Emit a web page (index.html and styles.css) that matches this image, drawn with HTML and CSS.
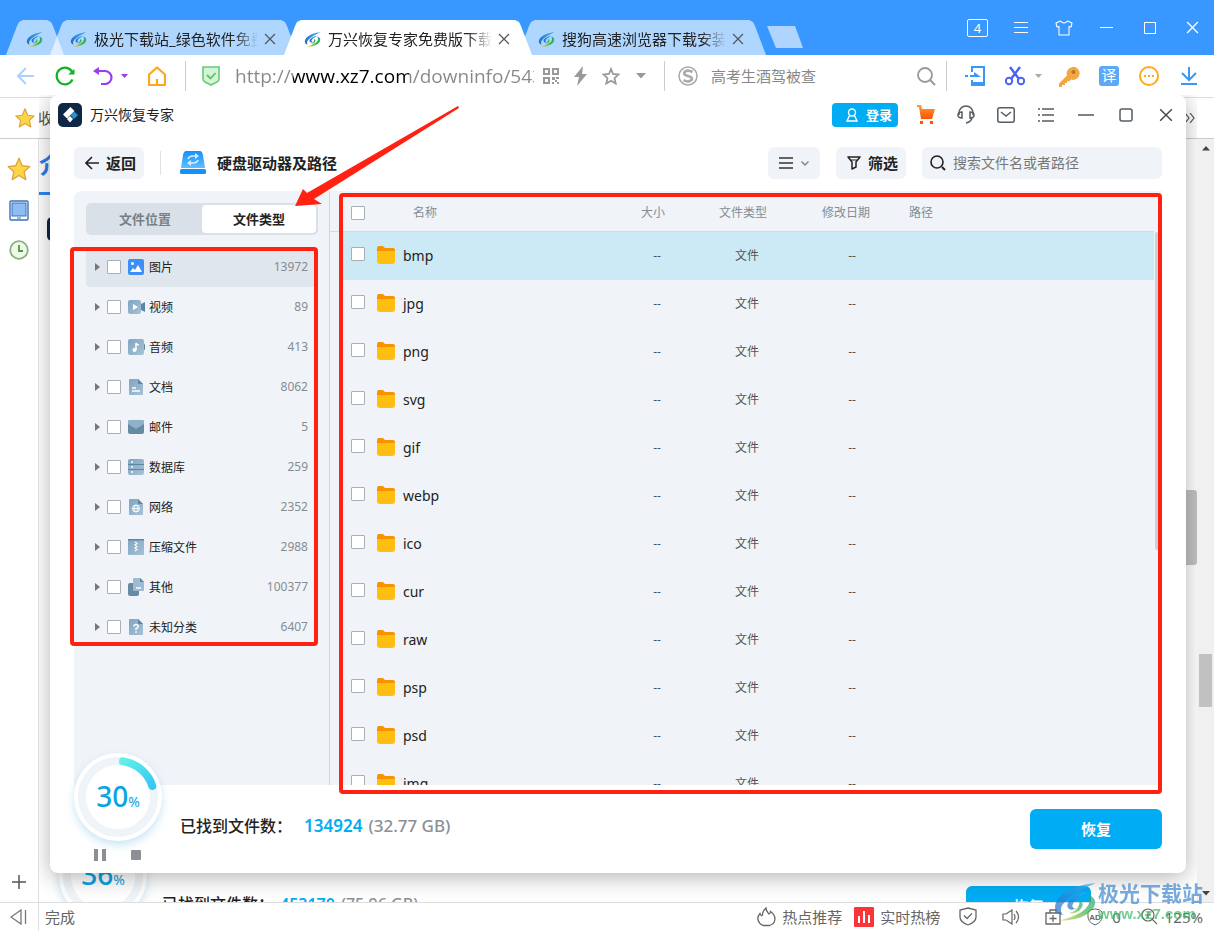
FILE: index.html
```html
<!DOCTYPE html>
<html lang="zh-CN">
<head>
<meta charset="utf-8">
<title>万兴恢复专家免费版下载</title>
<link rel="stylesheet" href="styles.css">
</head>
<body>
<svg class="defs" aria-hidden="true">
  <defs>
    <linearGradient id="swBlue" x1="0" y1="1" x2="1" y2="0"><stop offset="0" stop-color="#1f66c8"/><stop offset="1" stop-color="#3fb0ea"/></linearGradient>
    <linearGradient id="swGreen" x1="0" y1="1" x2="1" y2="0"><stop offset="0" stop-color="#e3d24a"/><stop offset=".5" stop-color="#3fb44a"/><stop offset="1" stop-color="#2aa58a"/></linearGradient>
    <linearGradient id="arc" x1="0" y1="0" x2="1" y2="1"><stop offset="0" stop-color="#62efe9"/><stop offset="1" stop-color="#35c8f3"/></linearGradient>
    <linearGradient id="cart" x1="0" y1="0" x2="0" y2="1"><stop offset="0" stop-color="#ff9a2e"/><stop offset="1" stop-color="#ff5208"/></linearGradient>
    <linearGradient id="drive" x1="0" y1="0" x2="0" y2="1"><stop offset="0" stop-color="#1590fb"/><stop offset="1" stop-color="#5cc0ff"/></linearGradient>
    <linearGradient id="slate" x1="0" y1="0" x2="1" y2="1"><stop offset="0" stop-color="#7fa6c3"/><stop offset="1" stop-color="#a6c1d6"/></linearGradient>
  </defs>
  <symbol id="swirl" viewBox="0 0 40 40">
    <path d="M39 3C24 3 4 12 2 23c-1 6 3 8 7 9-3-4-2-8 1-11C16 14 27 8 39 3z" fill="url(#swBlue)"/>
    <path d="M31 11c-9 1-17 6-18 12 0 4 4 5 8 3-3 0-4-2-3-4 2-5 7-7 13-11z" fill="url(#swBlue)"/>
    <path d="M31 13c7 2 9 7 6 12-5 8-17 12-31 12 11-3 22-7 26-14 2-4 1-7-1-10z" fill="url(#swGreen)"/>
    <path d="M24 19c3 1 4 3 2 6-2 4-7 6-12 5 4-1 8-3 9-6 1-2 1-3 1-5z" fill="url(#swGreen)"/>
  </symbol>
  <symbol id="folder" viewBox="0 0 18 18"><path d="M0 2q0-2 2-2h4l2 2h8q2 0 2 2v6H0z" fill="#f59300"/><path d="M0 5h18v10q0 3-3 3H3q-3 0-3-3z" fill="#ffbf10"/></symbol>
  <symbol id="x" viewBox="0 0 12 12"><path d="M1 1l10 10M11 1L1 11" fill="none" stroke="currentColor" stroke-width="1.2"/></symbol>
  <symbol id="starGold" viewBox="0 0 24 24"><path d="M12 2l3 7 7 .8-5.200 4.800 1.500 7.200L12 18l-6.300 3.800 1.500-7.200L2 9.800 9 9z" fill="#fcd548" stroke="#dfa23a" stroke-width="1.200" stroke-linejoin="round"/></symbol>
  <symbol id="doc" viewBox="0 0 16 16"><path d="M1 1q0-1 1-1h8l5 5v10q0 1-1 1H2q-1 0-1-1z" fill="url(#slate)"/><path d="M10 0l5 5h-5z" fill="#5e86a0"/></symbol>
</svg>

<header class="titlebar">
  <nav class="tabs">
    <div class="tab tab-pinned"><svg class="favicon"><use href="#swirl"/></svg></div>
    <div class="tab"><svg class="favicon"><use href="#swirl"/></svg><span class="tab-text">极光下载站_绿色软件免费</span><button class="tab-close" aria-label="关闭"><svg width="12" height="12"><use href="#x"/></svg></button></div>
    <div class="tab tab-active"><svg class="favicon"><use href="#swirl"/></svg><span class="tab-text">万兴恢复专家免费版下载</span><button class="tab-close" aria-label="关闭"><svg width="12" height="12"><use href="#x"/></svg></button></div>
    <div class="tab"><svg class="favicon"><use href="#swirl"/></svg><span class="tab-text">搜狗高速浏览器下载安装</span><button class="tab-close" aria-label="关闭"><svg width="12" height="12"><use href="#x"/></svg></button></div>
    <button class="tab-new" aria-label="新建标签"></button>
  </nav>
  <div class="sys-buttons">
    <button aria-label="标签数"><span class="tab-count">4</span></button>
    <button aria-label="菜单"><svg width="14" height="12" viewBox="0 0 14 12"><path d="M0 .5h14M0 5.500h14M0 10.500h14" stroke="#fff"/></svg></button>
    <button aria-label="皮肤"><svg width="18" height="16" viewBox="0 0 18 16"><path d="M5.500 1L1 3l1 4 2-.5V15h10V6.500l2 .5 1-4-4.500-2Q9 5 5.500 1z" fill="none" stroke="#fff" stroke-width="1.100" stroke-linejoin="round"/></svg></button>
    <button aria-label="最小化"><svg width="14" height="12" viewBox="0 0 14 12"><path d="M0 5.500h13" stroke="#fff"/></svg></button>
    <button aria-label="最大化"><svg width="12" height="12"><rect x=".5" y=".5" width="11" height="11" fill="none" stroke="#fff"/></svg></button>
    <button class="white" aria-label="关闭"><svg width="13" height="13"><use href="#x"/></svg></button>
  </div>
</header>

<div class="toolbar">
  <button class="tool" aria-label="后退"><svg width="18" height="18" viewBox="0 0 18 18"><path d="M10 1L2 9l8 8M2 9h16" fill="none" stroke="#a9d2ff" stroke-width="2"/></svg></button>
  <button class="tool" aria-label="刷新"><svg width="20" height="20" viewBox="0 0 20 20"><path d="M17.500 6.500A8.300 8.300 0 1 0 17.500 13.500" fill="none" stroke="#12b324" stroke-width="2.200"/><path d="M13 8.500h6.500V3z" fill="#12b324"/></svg></button>
  <button class="tool tool-undo" aria-label="撤销"><svg width="20" height="18" viewBox="0 0 20 18"><path d="M4 4h8a6.500 6.500 0 0 1 0 13H8" fill="none" stroke="#9a3cf0" stroke-width="2.200"/><path d="M6 0v8L0 4z" fill="#9a3cf0"/></svg><svg width="8" height="5"><path d="M0 0h7L3.500 4z" fill="#9a3cf0"/></svg></button>
  <button class="tool" aria-label="主页"><svg width="18" height="20" viewBox="0 0 18 20"><path d="M1 8.500L9 1.500l8 7V19H1zM9 19v-6" fill="none" stroke="#ffa71a" stroke-width="2.200" stroke-linejoin="round"/></svg></button>
  <div class="address">
    <svg width="18" height="20" viewBox="0 0 18 20"><path d="M1 1h16v12q0 2-2 3l-6 3-6-3q-2-1-2-3z" fill="#d2f5d6" stroke="#6cc97a" stroke-width="1.600"/><path d="M5 9l3.500 3.500L13.500 7" fill="none" stroke="#5fbf6e" stroke-width="1.800"/></svg>
    <input class="url" type="text" aria-label="网址" value="http://www.xz7.com/downinfo/543921.html">
    <button aria-label="二维码"><svg width="16" height="16" viewBox="0 0 16 16"><path d="M1 1h5v5H1zM10 1h5v5h-5zM1 10h5v5H1z" fill="none" stroke="#999" stroke-width="2"/><path d="M9 9h3v3H9zM13 9h3v2h-3zM12 12h2v2h-2zM9 14h2v2H9zM14 14h2v2h-2z" fill="#999"/></svg></button>
    <button aria-label="闪电"><svg width="16" height="20" viewBox="0 0 16 20"><path d="M10 0L1 11h5L4 20l10-12H9z" fill="#999"/></svg></button>
    <button aria-label="收藏"><svg width="18" height="18" viewBox="0 0 18 18"><path d="M9 2l2 5 5.500.5-4 3.700 1.200 5.300L9 13.700l-4.700 2.800 1.200-5.300-4-3.700L7 7z" fill="none" stroke="#999" stroke-width="1.800"/></svg></button>
    <button aria-label="更多"><svg width="10" height="6"><path d="M0 0h10L5 5.500z" fill="#999"/></svg></button>
  </div>
  <div class="websearch">
    <svg width="21" height="21" viewBox="0 0 21 21"><circle cx="10" cy="10" r="9" fill="none" stroke="#aaa" stroke-width="1.500"/><path d="M14.500 6Q10 3.500 7 5.500C4.500 8 8 9.500 10 10s5 1.500 3.500 4Q10 17 5.500 14" fill="none" stroke="#aaa" stroke-width="2.600"/></svg>
    <input type="text" aria-label="搜索" placeholder="高考生酒驾被查">
    <button aria-label="搜索"><svg width="19" height="19" viewBox="0 0 19 19"><circle cx="8" cy="8" r="7" fill="none" stroke="#999" stroke-width="1.800"/><path d="M13 13l5 5" stroke="#999" stroke-width="2"/></svg></button>
  </div>
  <div class="ext">
    <button class="tool" aria-label="发送到手机"><svg width="20" height="20" viewBox="0 0 20 20"><path d="M7 6V1h12v18H7v-5" fill="none" stroke="#3a97f7" stroke-width="2"/><path d="M7 16h12v3H7z" fill="#3a97f7"/><path d="M0 10h3M5 10h6" stroke="#3a97f7" stroke-width="2"/><path d="M9 6l7 5H9z" fill="#3a97f7"/></svg></button>
    <button class="tool" aria-label="截图"><svg width="20" height="20" viewBox="0 0 20 20"><path d="M5 1l9 12M15 1L6 13" stroke="#4a62f5" stroke-width="2.400"/><circle cx="4" cy="15" r="3.200" fill="none" stroke="#4a62f5" stroke-width="2"/><circle cx="16" cy="15" r="3.200" fill="none" stroke="#4a62f5" stroke-width="2"/></svg></button>
    <svg class="ext-caret" width="7" height="5"><path d="M0 0h7L3.500 4z" fill="#aaa"/></svg>
    <button class="tool" aria-label="密码"><svg width="21" height="21" viewBox="0 0 21 21"><path d="M0 17.500L8 9.500a6.500 6.500 0 1 1 4 4L10 15.500 8 15v2H6v2H3v2H0z" fill="#f2a743"/><circle cx="14.500" cy="6" r="2" fill="#b87a28"/></svg></button>
    <button class="tool" aria-label="翻译"><span class="translate">译</span></button>
    <button class="tool" aria-label="更多"><svg width="20" height="20" viewBox="0 0 20 20"><circle cx="10" cy="10" r="9" fill="none" stroke="#ffa91e" stroke-width="2"/><path d="M5 9h2v2H5zM9 9h2v2H9zM13 9h2v2h-2z" fill="#ffa91e"/></svg></button>
    <button class="tool" aria-label="下载"><svg width="18" height="18" viewBox="0 0 18 18"><path d="M9 0v13M2 6l7 7 7-7M1 17h16" fill="none" stroke="#3a97f7" stroke-width="2"/></svg></button>
  </div>
</div>

<div class="bookmarks"><svg width="22" height="22"><use href="#starGold"/></svg><span>收藏</span><button class="bm-more" aria-label="更多书签"><svg width="12" height="10" viewBox="0 0 12 10"><path d="M1 0l4 5-4 5M6 0l4 5-4 5" fill="none" stroke="#555" stroke-width="1.200"/></svg></button></div>

<div class="main">
  <aside class="side">
    <svg width="26" height="26"><use href="#starGold"/></svg>
    <svg width="20" height="22" viewBox="0 0 20 22"><rect x="1" y="1" width="18" height="19" rx="1" fill="#fff" stroke="#3f70b5" stroke-width="1.400"/><rect x="3" y="3" width="14" height="13" fill="#8fbdf1" stroke="#3572c4"/><path d="M8 18h4" stroke="#3572c4"/></svg>
    <svg width="20" height="20" viewBox="0 0 20 20"><circle cx="10" cy="10" r="8.800" fill="#eff8e9" stroke="#8ab27e" stroke-width="1.800"/><path d="M10 5v6h4" fill="none" stroke="#4f9a3c" stroke-width="1.800"/></svg>
    <svg class="side-plus" width="14" height="14"><path d="M7 0v14M0 7h14" stroke="#555" stroke-width="1.500"/></svg>
  </aside>
  <main class="page">
    <h1 class="page-tab">介绍</h1>
    <div class="page-logo"></div>
    <div class="page-bottom">
      <div class="ring">
        <svg width="88" height="88" viewBox="0 0 88 88"><circle cx="44" cy="44" r="36" fill="none" stroke="#eff4f8" stroke-width="8"/></svg>
        <div class="ring-value"><b>36</b>%</div>
      </div>
      <p class="found">已找到文件数：<b>453170</b><span>(75.96 GB)</span></p>
      <button class="recover recover-back">恢复</button>
    </div>
    <div class="page-thumb"></div>
  </main>
  <div class="scrollbar"><svg width="8" height="5"><path d="M4 0l4 4.500H0z" fill="#444"/></svg><i></i><svg width="8" height="5"><path d="M0 0h8L4 4.500z" fill="#444"/></svg></div>
</div>

<footer class="status">
  <button class="status-toggle" aria-label="侧栏"><svg width="18" height="16" viewBox="0 0 18 16"><path d="M11 1v14L1 8zM15.500 1v14" fill="none" stroke="#777" stroke-width="1.300"/></svg></button>
  <span class="status-done">完成</span>
  <a href="#" class="hot"><svg width="19" height="20" viewBox="0 0 19 20"><path d="M6 18.500C1 16.500-1 11 3 6.500 4 9 5 9 5.500 8 5.500 5 6.500 3 9 1c0 3 1.500 4 3 6 1-.5 1.500-1 1.500-2.500C20 9 19 16.500 12.500 18.500z" fill="none" stroke="#666" stroke-width="1.300"/></svg>热点推荐</a>
  <a href="#" class="rank"><svg width="20" height="20"><rect width="20" height="20" rx="1" fill="#fb3537"/><path d="M5 9v7M10 4v12M15 8v8" stroke="#fff" stroke-width="2"/></svg>实时热榜</a>
  <svg width="18" height="19" viewBox="0 0 18 19"><path d="M9 1l8 2v7q0 5-8 8-8-3-8-8V3z" fill="none" stroke="#666" stroke-width="1.300"/><path d="M5 8.500l3 3 5-5" fill="none" stroke="#666" stroke-width="1.300"/></svg>
  <svg width="18" height="16" viewBox="0 0 18 16"><path d="M1 5v6h3l6 4V1L4 5zM12 5q2 3 0 6M14 2q5 6 0 12" fill="none" stroke="#666" stroke-width="1.200"/></svg>
  <svg width="16" height="16" viewBox="0 0 16 16"><path d="M1 4h14v11H1zM5 4V1h6v3M8 6v7M4.500 9.500h7" fill="none" stroke="#666" stroke-width="1.300"/></svg>
  <span class="adblock"><svg width="18" height="18" viewBox="0 0 18 18"><path d="M9 1q5 0 7 3v5q0 5-7 8-7-3-7-8V4q2-3 7-3z" fill="none" stroke="#666"/><text x="9" y="12" text-anchor="middle" class="ad">AD</text></svg>0</span>
  <span class="zoom"><svg width="16" height="17" viewBox="0 0 16 17"><circle cx="7" cy="7" r="6" fill="none" stroke="#666" stroke-width="1.200"/><path d="M11 11l5 5M4 7h6M7 4v6" stroke="#666" stroke-width="1.200"/></svg>125%</span>
</footer>

<section class="app">
  <header class="app-head">
    <svg width="24" height="24" viewBox="0 0 24 24"><rect width="24" height="24" rx="5" fill="#0e2744"/><path d="M12.500 4l4 4-7.500 7.500-4-4z" fill="#fff"/><path d="M12 13l3 3-3 3.500-3-3.500z" fill="#fff"/><path d="M16 8.500l4 3.500-4 4-3.500-3.800z" fill="#2494d8"/></svg>
    <h2>万兴恢复专家</h2>
    <button class="login"><svg width="12" height="14" viewBox="0 0 12 14"><circle cx="6" cy="4.500" r="3.500" fill="none" stroke="#fff" stroke-width="1.400"/><path d="M3.500 7.500L1 13h10L8.500 7.500" fill="none" stroke="#fff" stroke-width="1.400"/></svg>登录</button>
    <button class="app-btn" aria-label="购物车"><svg width="20" height="20" viewBox="0 0 20 20"><path d="M1 0h4l1 4h13l-3 10H5L3 2H1z" fill="url(#cart)"/><path d="M4 16h3v3H4zM14 16h3v3h-3z" fill="#ff5208"/></svg></button>
    <button class="app-btn" aria-label="客服"><svg width="18" height="20" viewBox="0 0 18 20"><path d="M2 10V8a7 7 0 0 1 14 0v2" fill="none" stroke="#555c62" stroke-width="1.500"/><path d="M5 7v6q-4 0-4-3t4-3zM13 7v6q4 0 4-3t-4-3zM15 13q-1 4-6 5" fill="none" stroke="#555c62" stroke-width="1.500"/></svg></button>
    <button class="app-btn" aria-label="邮件"><svg width="18" height="16" viewBox="0 0 18 16"><rect x=".8" y=".8" width="16.400" height="14.400" rx="2" fill="none" stroke="#555c62" stroke-width="1.500"/><path d="M4 5l5 4 5-4" fill="none" stroke="#555c62" stroke-width="1.500"/></svg></button>
    <button class="app-btn" aria-label="列表"><svg width="16" height="16" viewBox="0 0 16 16"><path d="M0 2h2M4 2h12M0 8h2M4 8h12M0 14h2M4 14h12" stroke="#555c62" stroke-width="1.600"/></svg></button>
    <button class="app-btn" aria-label="最小化"><svg width="16" height="2"><path d="M0 1h16" stroke="#7a8288" stroke-width="2"/></svg></button>
    <button class="app-btn" aria-label="最大化"><svg width="14" height="14"><rect x="1" y="1" width="12" height="12" rx="2" fill="none" stroke="#555c62" stroke-width="1.500"/></svg></button>
    <button class="app-btn" aria-label="关闭"><svg width="14" height="14"><use href="#x"/></svg></button>
  </header>

  <div class="app-bar">
    <button class="pill back"><svg width="14" height="14" viewBox="0 0 14 14"><path d="M7 1L1 7l6 6M1 7h13" fill="none" stroke="#222" stroke-width="1.600"/></svg>返回</button>
    <svg class="drive" width="26" height="24" viewBox="0 0 26 24"><path d="M6 0h14q2 0 3 4l2 13H1L3 4q1-4 3-4z" fill="url(#drive)"/><rect y="18" width="26" height="5" rx="1.500" fill="#1690fa"/><path d="M8 8q1-3 5-3h3M18 9q-1 3-5 3h-3" fill="none" stroke="#d6edff" stroke-width="1.600"/><path d="M15 2l4 3-4 3zM11 9l-4 3 4 3z" fill="#d6edff"/></svg>
    <h3>硬盘驱动器及路径</h3>
    <button class="pill view" aria-label="视图"><svg width="14" height="12" viewBox="0 0 14 12"><path d="M0 1h14M0 6h14M0 11h14" stroke="#333" stroke-width="1.500"/></svg><svg width="8" height="5" viewBox="0 0 8 5"><path d="M.5.5L4 4 7.500.5" fill="none" stroke="#888" stroke-width="1.500"/></svg></button>
    <button class="pill filter"><svg width="14" height="14" viewBox="0 0 14 14"><path d="M1 1h12L9 6v5l-4 2V6z" fill="none" stroke="#222" stroke-width="1.500" stroke-linejoin="round"/><path d="M4 4h6" stroke="#222"/></svg>筛选</button>
    <label class="pill find"><svg width="16" height="16" viewBox="0 0 16 16"><circle cx="7" cy="7" r="6" fill="none" stroke="#222" stroke-width="1.600"/><path d="M12 12l3 3" stroke="#222" stroke-width="2"/></svg><input type="text" aria-label="搜索文件" placeholder="搜索文件名或者路径"></label>
  </div>

  <div class="app-body">
    <aside class="panel-left">
      <div class="segment"><button>文件位置</button><button class="on">文件类型</button></div>
      <ul class="tree">
        <li class="sel"><i class="tri"></i><input type="checkbox" id="t1"><svg width="16" height="16"><rect width="16" height="16" rx="2" fill="#3b8ff5"/><circle cx="4.500" cy="4.500" r="1.500" fill="#fff"/><path d="M2 13l3-4 2 2 3-5 4 7z" fill="#fff"/></svg><label for="t1">图片</label><output>13972</output></li>
        <li><i class="tri"></i><input type="checkbox" id="t2"><svg width="17" height="16"><rect y="1" width="13" height="14" rx="2" fill="url(#slate)"/><path d="M17 3v10l-4-2V5z" fill="#5e86a0"/><path d="M5 5l5 3-5 3z" fill="#fff"/></svg><label for="t2">视频</label><output>89</output></li>
        <li><i class="tri"></i><input type="checkbox" id="t3"><svg width="17" height="16"><circle cx="13" cy="8" r="4.500" fill="#5e86a0"/><rect width="16" height="16" rx="2" fill="url(#slate)"/><path d="M8 11V4q1 2 3 2" fill="none" stroke="#fff" stroke-width="1.500"/><circle cx="6.500" cy="11" r="2" fill="#fff"/></svg><label for="t3">音频</label><output>413</output></li>
        <li><i class="tri"></i><input type="checkbox" id="t4"><svg width="16" height="16"><use href="#doc" width="16" height="16"/><path d="M4 9h4M4 12h8" stroke="#fff" stroke-width="1.500"/></svg><label for="t4">文档</label><output>8062</output></li>
        <li><i class="tri"></i><input type="checkbox" id="t5"><svg width="16" height="16"><rect y="1" width="16" height="14" rx="2" fill="#668ba3"/><path d="M0 5V3q0-2 2-2h12q2 0 2 2v2l-8 5z" fill="#8fb2cb"/></svg><label for="t5">邮件</label><output>5</output></li>
        <li><i class="tri"></i><input type="checkbox" id="t6"><svg width="16" height="16"><rect width="16" height="16" rx="2" fill="url(#slate)"/><path d="M0 5.500h16M0 10.500h16" stroke="#5e86a0"/><path d="M3 3h2M3 8h2M3 13h2" stroke="#fff" stroke-width="1.500"/></svg><label for="t6">数据库</label><output>259</output></li>
        <li><i class="tri"></i><input type="checkbox" id="t7"><svg width="16" height="16"><use href="#doc" width="16" height="16"/><circle cx="8" cy="9.500" r="3.500" fill="none" stroke="#fff"/><ellipse cx="8" cy="9.500" rx="1.500" ry="3.500" fill="none" stroke="#fff" stroke-width=".8"/><path d="M4.500 9.500h7" stroke="#fff"/></svg><label for="t7">网络</label><output>2352</output></li>
        <li><i class="tri"></i><input type="checkbox" id="t8"><svg width="16" height="16"><rect width="16" height="16" rx="1" fill="url(#slate)"/><path d="M0 .7h16" stroke="#5e86a0" stroke-width="1.400"/><path d="M7 3l2 1.500L7 6l2 1.500L7 9l2 1.500L7 12" fill="none" stroke="#fff" stroke-width="1.200"/></svg><label for="t8">压缩文件</label><output>2988</output></li>
        <li><i class="tri"></i><input type="checkbox" id="t9"><svg width="16" height="18"><rect y="5" width="11" height="13" rx="2" fill="#668ba3"/><path d="M5 1q0-1 1-1h6l4 4v8q0 1-1 1H6q-1 0-1-1z" fill="#9dbbd1"/><path d="M12 0l4 4h-4z" fill="#5e86a0"/><path d="M8 10h5" stroke="#fff" stroke-width="1.500"/></svg><label for="t9">其他</label><output>100377</output></li>
        <li><i class="tri"></i><input type="checkbox" id="t10"><svg width="16" height="16"><use href="#doc" width="16" height="16"/><path d="M5.800 7.500Q6 5.500 8 5.500t2.200 2Q10 9 8 9.500V11" fill="none" stroke="#fff" stroke-width="1.500"/><path d="M7.200 12.200h1.600v1.600H7.200z" fill="#fff"/></svg><label for="t10">未知分类</label><output>6407</output></li>
      </ul>
      <div class="mark mark-tree"></div>
    </aside>

    <div class="panel-right">
      <div class="table-wrap">
        <table>
          <colgroup><col class="c-check"><col class="c-name"><col class="c-size"><col class="c-type"><col class="c-date"><col></colgroup>
          <thead><tr><th><input type="checkbox" aria-label="全选"></th><th class="name">名称</th><th>大小</th><th>文件类型</th><th class="date">修改日期</th><th class="path">路径</th></tr></thead>
          <tbody>
            <tr class="sel"><td><input type="checkbox" aria-label="bmp"></td><td class="name"><svg><use href="#folder"/></svg>bmp</td><td>--</td><td>文件</td><td>--</td><td></td></tr>
            <tr><td><input type="checkbox" aria-label="jpg"></td><td class="name"><svg><use href="#folder"/></svg>jpg</td><td>--</td><td>文件</td><td>--</td><td></td></tr>
            <tr><td><input type="checkbox" aria-label="png"></td><td class="name"><svg><use href="#folder"/></svg>png</td><td>--</td><td>文件</td><td>--</td><td></td></tr>
            <tr><td><input type="checkbox" aria-label="svg"></td><td class="name"><svg><use href="#folder"/></svg>svg</td><td>--</td><td>文件</td><td>--</td><td></td></tr>
            <tr><td><input type="checkbox" aria-label="gif"></td><td class="name"><svg><use href="#folder"/></svg>gif</td><td>--</td><td>文件</td><td>--</td><td></td></tr>
            <tr><td><input type="checkbox" aria-label="webp"></td><td class="name"><svg><use href="#folder"/></svg>webp</td><td>--</td><td>文件</td><td>--</td><td></td></tr>
            <tr><td><input type="checkbox" aria-label="ico"></td><td class="name"><svg><use href="#folder"/></svg>ico</td><td>--</td><td>文件</td><td>--</td><td></td></tr>
            <tr><td><input type="checkbox" aria-label="cur"></td><td class="name"><svg><use href="#folder"/></svg>cur</td><td>--</td><td>文件</td><td>--</td><td></td></tr>
            <tr><td><input type="checkbox" aria-label="raw"></td><td class="name"><svg><use href="#folder"/></svg>raw</td><td>--</td><td>文件</td><td>--</td><td></td></tr>
            <tr><td><input type="checkbox" aria-label="psp"></td><td class="name"><svg><use href="#folder"/></svg>psp</td><td>--</td><td>文件</td><td>--</td><td></td></tr>
            <tr><td><input type="checkbox" aria-label="psd"></td><td class="name"><svg><use href="#folder"/></svg>psd</td><td>--</td><td>文件</td><td>--</td><td></td></tr>
            <tr><td><input type="checkbox" aria-label="img"></td><td class="name"><svg><use href="#folder"/></svg>img</td><td>--</td><td>文件</td><td>--</td><td></td></tr>
          </tbody>
        </table>
        <div class="table-thumb"></div>
      </div>
      <div class="mark mark-table"></div>
    </div>
  </div>

  <footer class="app-foot">
    <div class="progress">
      <div class="ring">
        <svg width="88" height="88" viewBox="0 0 88 88"><circle cx="44" cy="44" r="36" fill="none" stroke="#eff4f8" stroke-width="8"/><path d="M49 8.400A36 36 0 0 1 78.300 33" fill="none" stroke="url(#arc)" stroke-width="8" stroke-linecap="round"/></svg>
        <div class="ring-value"><b>30</b>%</div>
      </div>
      <div class="controls"><button aria-label="暂停"><svg width="12" height="12"><path d="M0 0h4v12H0zM8 0h4v12H8z" fill="#8a9096"/></svg></button><button aria-label="停止"><svg width="10" height="10"><rect width="10" height="10" rx="1" fill="#8a9096"/></svg></button></div>
    </div>
    <p class="found">已找到文件数：<b>134924</b><span>(32.77 GB)</span></p>
    <button class="recover">恢复</button>
  </footer>
  <svg class="arrow" width="166" height="102" viewBox="294 105 166 102"><path d="M458 106l1 2-145 91 8 5-27 2 8-17 4 4z" fill="#ff2112"/></svg>
</section>

<div class="watermark"><svg width="46" height="44"><use href="#swirl"/></svg><div><strong>极光下载站</strong><em>www.xz7.com</em></div></div>
</body>
</html>
```
FILE: styles.css
```css
* { box-sizing: border-box; }
body {
  margin: 0;
  height: 100vh;
  display: flex;
  flex-direction: column;
  overflow: hidden;
  position: relative;
  background: #fff;
  color: #222;
  font: 14px/20px "Noto Sans", "Noto Sans CJK SC", sans-serif;
}
button, input { font: inherit; color: inherit; }
button { border: 0; padding: 0; background: none; display: flex; align-items: center; justify-content: center; }
h1, h2, h3, p, ul { margin: 0; padding: 0; font-weight: 400; }
svg { display: block; flex: none; }
input[type="text"] { border: 0; outline: 0; background: none; padding: 0; min-width: 0; }
input[type="checkbox"] {
  appearance: none;
  margin: 0;
  width: 14px;
  height: 14px;
  flex: none;
  display: block;
  background: #fff;
  border: 1px solid #a9b0b5;
  border-radius: 1px;
}
.defs { position: absolute; width: 0; height: 0; }

/* browser title bar */
.titlebar { flex: none; height: 55px; background: #3898ff; display: flex; justify-content: space-between; }
.tabs { display: flex; align-items: flex-end; padding-left: 6px; min-width: 0; }
.tab { position: relative; z-index: 0; width: 248px; height: 35px; margin-right: -14px; padding: 3px 22px 0 20px; display: flex; align-items: center; font-size: 15px; }
.tab::before {
  content: "";
  position: absolute;
  inset: 0;
  z-index: -1;
  background: rgba(255, 255, 255, .6);
  clip-path: polygon(0 100%, 11px 6px, 13px 2px, 17px 0, calc(100% - 17px) 0, calc(100% - 13px) 2px, calc(100% - 11px) 6px, 100% 100%);
}
.tab-pinned { width: 58px; }
.tab-active { z-index: 1; }
.tab-active::before { background: #fff; }
.favicon { width: 17px; height: 17px; }
.tab-text { flex: 1; margin: 0 6px 0 7px; overflow: hidden; white-space: nowrap; mask-image: linear-gradient(to right, #000 85%, transparent); }
.tab-close { color: #555; }
.tab-new { width: 36px; height: 22px; margin: 0 0 7px 15px; background: #afd5ff; clip-path: polygon(0 0, 28px 0, 100% 100%, 9px 100%); }
.sys-buttons { display: flex; }
.sys-buttons button { width: 43px; }
.white { color: #fff; }
.tab-count { width: 21px; height: 18px; border: 1px solid #fff; border-radius: 2px; color: #fff; font-size: 13px; line-height: 16px; text-align: center; }

/* browser toolbar */
.toolbar { flex: none; height: 43px; padding: 0 5px; display: flex; align-items: center; border-bottom: 1px solid #ddd; background: #fff; }
.tool { width: 40px; height: 40px; flex: none; }
.tool-undo { width: 52px; gap: 8px; }
.address { flex: 454 1 0; min-width: 0; height: 30px; margin-left: 8px; padding: 0 8px 0 16px; border-left: 1px solid #ccc; display: flex; align-items: center; }
.url {
  flex: 1;
  height: 30px;
  margin: 0 2px 0 15px;
  font: 19px/30px "Open Sans", sans-serif;
}
.address .url {
  color: transparent;
  background: linear-gradient(to right, #888 58px, #000 58px, #000 174px, #888 174px);
  background-clip: text;
}
.address button { width: 30px; height: 30px; }
.websearch { flex: 258 1 0; min-width: 0; height: 30px; padding: 0 10px 0 13px; border-left: 1px solid #ccc; border-right: 1px solid #ccc; display: flex; align-items: center; font-size: 15px; }
.websearch input { flex: 1; margin-left: 12px; }
.websearch input::placeholder { color: #888; opacity: 1; }
.ext { display: flex; align-items: center; margin-left: 8px; }
.ext-caret { margin-right: 7px; }
.translate { width: 20px; height: 20px; border-radius: 3px; background: #5aa9f8; color: #fff; font-size: 15px; line-height: 19px; text-align: center; }

.bookmarks { flex: none; height: 41px; padding: 0 18px 0 14px; border-bottom: 1px solid #ccc; display: flex; align-items: center; gap: 2px; font-size: 15px; color: #555; }
.bm-more { margin-left: auto; }

/* web page behind the application */
.main { flex: 1; min-height: 0; display: flex; }
.side { width: 39px; flex: none; border-right: 1px solid #ddd; padding: 17px 0 13px; display: flex; flex-direction: column; align-items: center; gap: 18px; }
.side-plus { margin-top: auto; }
.page { flex: 1; min-width: 0; position: relative; overflow: hidden; display: flex; flex-direction: column; background: #fff; }
.page-tab { width: 64px; padding: 11px 0 12px; border-bottom: 3px solid #2f86f6; color: #2f7bea; font-size: 24px; line-height: 30px; font-weight: 700; }
.page-logo { width: 24px; height: 24px; margin: 22px 0 0 8px; border-radius: 5px; background: #0e2744; }
.page-bottom { margin-top: auto; margin-bottom: -18px; padding: 0 106px 0 20px; display: flex; align-items: flex-end; }
.page-bottom .found { margin: 0 auto 4px 15px; }
.page-thumb { position: absolute; right: 0; top: 351px; width: 11px; height: 75px; background: #c2c2c2; border-radius: 0 3px 3px 0; }
.scrollbar { width: 17px; flex: none; background: #f0f0f0; display: flex; flex-direction: column; align-items: center; justify-content: space-between; padding: 7px 0 6px; }
.scrollbar i { width: 13px; height: 53px; margin-top: 318px; background: #c1c1c1; }

/* status bar */
.status { flex: none; height: 28px; padding-right: 11px; border-top: 1px solid #ddd; background: #fff; display: flex; align-items: center; gap: 25px; color: #666; font-size: 15px; line-height: 18px; }
.status-toggle { width: 39px; height: 27px; border-right: 1px solid #ddd; }
.status-done { margin: 0 auto 0 -19px; }
.status a { display: flex; align-items: center; gap: 6px; color: inherit; text-decoration: none; }
.rank { margin-left: -13px; margin-right: -6px; }
.adblock, .zoom { display: flex; align-items: center; gap: 8px; }
.adblock { margin-right: -5px; }
.ad { font: 700 8px "Liberation Sans", sans-serif; fill: #666; }

/* application window */
.app { position: absolute; z-index: 2; top: 95px; left: 50px; right: 28px; bottom: 57px; background: #fff; border-radius: 8px; box-shadow: 0 4px 22px rgba(0, 0, 0, .3); clip-path: inset(0 -11px -29px -11px); display: flex; flex-direction: column; }
.app-head { flex: none; height: 40px; padding-left: 8px; display: flex; align-items: center; color: #444; }
.app-head h2 { margin: 0 auto 0 8px; color: #222; font-size: 14px; line-height: 20px; }
.login { width: 66px; height: 24px; padding-left: 8px; gap: 8px; margin-right: 8px; border-radius: 4px; background: #00adf5; color: #fff; font-size: 13px; font-weight: 700; }
.app-btn { width: 40px; height: 40px; }
.app-bar { flex: none; height: 56px; padding: 0 24px 0 24px; display: flex; align-items: center; }
.pill { height: 32px; border-radius: 6px; background: #f0f4f8; display: flex; align-items: center; justify-content: center; gap: 7px; font-size: 15px; font-weight: 700; }
.back, .filter { width: 70px; padding-left: 3px; }
.drive { box-sizing: content-box; margin-left: 16px; padding-left: 19px; border-left: 1px solid #dde2e6; }
.app-bar h3 { margin: 0 auto 0 11px; font-size: 15px; line-height: 20px; font-weight: 700; }
.view { width: 52px; margin-right: 16px; gap: 8px; }
.filter { margin-right: 16px; }
.find { width: 240px; padding: 0 8px; font-size: 14px; font-weight: 400; }
.find input { flex: 1; }
.find input::placeholder { color: #777; opacity: 1; }

.app-body { flex: 1; min-height: 0; margin: 0 24px; display: flex; background: #f0f4f8; border-radius: 8px 0 0 0; }
.panel-left { position: relative; width: 256px; flex: none; padding: 12px 11px 0 12px; border-right: 1px solid #d0d5d9; }
.segment { height: 32px; padding: 2px; display: flex; border-radius: 5px; background: #dae0e7; font-size: 13px; font-weight: 700; }
.segment button { flex: 1; border-radius: 4px; color: #777f86; }
.segment .on { background: #fff; color: #222; }
.tree { list-style: none; margin-top: 12px; font-size: 12px; }
.tree li { height: 40px; padding: 0 10px 0 9px; display: flex; align-items: center; border-radius: 4px; }
.tree .sel { background: #e0e6ed; }
.tree label { padding-top: 2px; }
.tri { width: 5px; border: solid transparent; border-width: 4px 0 4px 5px; border-left-color: #777; margin-right: 7px; }
.tree svg { width: 17px; margin: 0 4px 0 7px; }
.tree output { margin-left: auto; color: #858c92; }
.panel-right { position: relative; flex: 1; min-width: 0; }
.table-wrap { position: relative; height: 100%; padding-right: 8px; overflow: hidden; }
table { width: 100%; table-layout: fixed; border-collapse: separate; border-spacing: 0; font-size: 12px; }
.c-check { width: 43px; }
.c-name { width: 251px; }
.c-size { width: 66px; }
.c-type { width: 114px; }
.c-date { width: 96px; }
th { height: 41px; padding: 3px 8px 0 0; border-bottom: 1px solid #d5dbe0; color: #858c92; font-weight: 400; }
th:first-child { padding-left: 21px; }
th.name { padding-left: 40px; text-align: left; }
th.date { padding-right: 12px; }
th.path { padding-left: 9px; text-align: left; }
td { height: 48px; padding: 0; text-align: center; color: #555; }
td:first-child { padding: 0 0 4px 9px; border-left: 12px solid transparent; background-clip: padding-box; }
.sel td { background-color: #cceaf5; }
td.name { padding-left: 4px; text-align: left; color: #222; font-size: 14px; }
td.name svg { display: inline-block; width: 18px; height: 18px; margin-right: 8px; vertical-align: -3px; }
.table-thumb { position: absolute; top: 41px; right: 3px; width: 4px; height: 318px; background: #cbd0d5; border-radius: 2px; }

/* highlight frames */
.mark { position: absolute; z-index: 1; border: 4px solid #ff2112; border-radius: 4px; pointer-events: none; }
.mark-tree { left: -4px; right: 11px; top: 56px; height: 399px; }
.mark-table { left: 9px; right: 0; top: 2px; bottom: -9px; }
.arrow { position: absolute; left: 244px; top: 10px; z-index: 2; }

.app-foot { position: relative; flex: none; height: 88px; padding: 0 24px 0 130px; display: flex; align-items: center; justify-content: space-between; }
.progress { position: absolute; left: 24px; bottom: 12px; }
.ring { position: relative; flex: none; width: 88px; height: 88px; border-radius: 50%; background: #fff; box-shadow: 0 4px 8px rgba(40, 150, 220, .25); }
.ring-value { position: absolute; inset: 0; display: flex; align-items: baseline; justify-content: center; color: #08a4e4; font-size: 14px; line-height: 86px; }
.ring-value b { font-size: 28px; font-weight: 500; }
.page-bottom .ring-value { line-height: 84px; }
.controls { height: 12px; margin: 8px 20px 0; display: flex; gap: 25px; align-items: center; }
.found { display: flex; align-items: baseline; font-size: 16px; line-height: 24px; font-weight: 500; white-space: nowrap; }
.found b { margin: 0 6px 0 12px; color: #00adf5; font-size: 17px; font-weight: 600; }
.found span { color: #8a9096; font-size: 17px; }
.app-foot .found { margin-bottom: 6px; }
.page-bottom .found b { margin-left: 6px; }
.page-bottom .found b, .page-bottom .found span { font-size: 16px; }
.recover { width: 132px; height: 40px; border-radius: 6px; background: #00adf5; color: #fff; font-size: 15px; font-weight: 700; }
.recover-back { width: 125px; margin-bottom: -6px; }

.watermark { position: absolute; z-index: 3; right: 11px; bottom: 6px; display: flex; align-items: center; opacity: .7; }
.watermark div { display: flex; flex-direction: column; }
.watermark strong { color: #3f87cf; font-size: 21px; line-height: 24px; font-weight: 700; }
.watermark em { color: #3fb463; font: 700 15px/18px "Liberation Sans", sans-serif; }
```
